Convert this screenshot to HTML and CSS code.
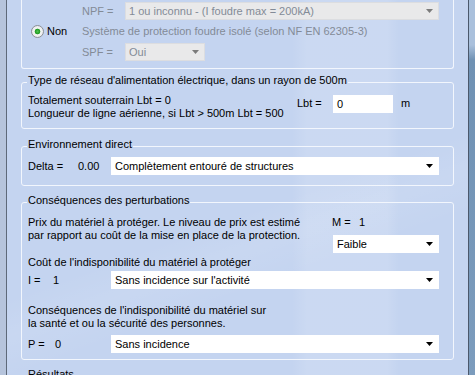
FILE: index.html
```html
<!DOCTYPE html>
<html lang="fr">
<head>
  <meta charset="UTF-8">
  <meta name="viewport" content="width=device-width, initial-scale=1.0">
  <title>Analyse du risque foudre</title>
  <link rel="stylesheet" href="styles.css">
</head>
<body>
  <div class="window">
    <div class="frame-left"></div>

    <div class="client">
      <!-- Protection foudre (scrolled, top is hidden) -->
      <div class="group group-top">
        <span></span>
        <span class="off">NPF =</span>
        <div class="combo off">1 ou inconnu - (I foudre max = 200kA)<svg class="arrow" width="7" height="4" viewBox="0 0 7 4"><polygon points="0,0 7,0 3.5,4"/></svg></div>

        <label class="radio"><span class="dot"></span>Non</label>
        <span class="off span2">Système de protection foudre isolé (selon NF EN 62305-3)</span>

        <span></span>
        <span class="off">SPF =</span>
        <div class="combo off small">Oui<svg class="arrow" width="7" height="4" viewBox="0 0 7 4"><polygon points="0,0 7,0 3.5,4"/></svg></div>
      </div>

      <!-- Réseau d'alimentation -->
      <fieldset class="group group-lbt">
        <legend>Type de réseau d'alimentation électrique, dans un rayon de 500m</legend>
        <div class="lbt-row">
          <p>Totalement souterrain Lbt = 0<br>Longueur de ligne aérienne, si Lbt &gt; 500m Lbt = 500</p>
          <span class="lbt-label">Lbt =</span>
          <div class="field">0</div>
          <span class="unit">m</span>
        </div>
      </fieldset>

      <!-- Environnement -->
      <fieldset class="group group-env">
        <legend>Environnement direct</legend>
        <div class="var-row">
          <span class="k k-delta">Delta =</span>
          <span class="v">0.00</span>
          <div class="combo">Complètement entouré de structures<svg class="arrow" width="7" height="4" viewBox="0 0 7 4"><polygon points="0,0 7,0 3.5,4"/></svg></div>
        </div>
      </fieldset>

      <!-- Conséquences -->
      <fieldset class="group group-csq">
        <legend>Conséquences des perturbations</legend>
        <div class="price">
          <p>Prix du matériel à protéger. Le niveau de prix est estimé<br>par rapport au coût de la mise en place de la protection.</p>
          <div class="price-side">
            <div><span class="k k-m">M =</span><span>1</span></div>
            <div class="combo">Faible<svg class="arrow" width="7" height="4" viewBox="0 0 7 4"><polygon points="0,0 7,0 3.5,4"/></svg></div>
          </div>
        </div>

        <p class="q q-cost">Coût de l'indisponibilité du matériel à protéger</p>
        <div class="var-row row-i">
          <span class="k k-i">I =</span>
          <span class="v">1</span>
          <div class="combo">Sans incidence sur l'activité<svg class="arrow" width="7" height="4" viewBox="0 0 7 4"><polygon points="0,0 7,0 3.5,4"/></svg></div>
        </div>

        <p class="q q-safety">Conséquences de l'indisponibilité du matériel sur<br>la santé et ou la sécurité des personnes.</p>
        <div class="var-row row-p">
          <span class="k k-p">P =</span>
          <span class="v">0</span>
          <div class="combo">Sans incidence<svg class="arrow" width="7" height="4" viewBox="0 0 7 4"><polygon points="0,0 7,0 3.5,4"/></svg></div>
        </div>
      </fieldset>

      <fieldset class="group group-res">
        <legend>Résultats</legend>
      </fieldset>
    </div>

    <div class="frame-right"></div>
  </div>
</body>
</html>
```

FILE: styles.css
```css
/* Global */
* {
  box-sizing: border-box;
  margin: 0;
  padding: 0;
}

html, body {
  height: 100%;
  overflow: hidden;
}

body {
  font-family: "Liberation Sans", Arial, sans-serif;
  font-size: 11px;
  line-height: 13px;
  color: #000;
  background-color: #c5d5f1;
}

/* Window frame */
.window {
  display: flex;
  height: 375px;
}

.frame-left {
  width: 7px;
  background-color: #b6c4dc;
  border-right: 1px solid #5e6979;
}

.frame-right {
  width: 7px;
  background: linear-gradient(180deg, #a9c0dc 0, #a9c0dc 45px, #6f91b3 60px, #7c9cbd 100%);
  border-left: 1px solid #4b586c;
}

.client {
  flex: 1;
  padding: 0 14px;
  background:
    linear-gradient(90deg, rgba(255,255,255,0) 285px, rgba(255,255,255,0.12) 300px, rgba(255,255,255,0.12) 380px, rgba(255,255,255,0) 392px),
    linear-gradient(160deg, rgba(255,255,255,0) 55%, rgba(255,255,255,0.08) 62%, rgba(255,255,255,0) 70%),
    #c4d4f0;
}

/* Group boxes */
.group {
  border: 1px solid #f2f6fd;
  border-radius: 3px;
  padding: 0 14px 0 6px;
  margin-top: 8px;
  min-width: 0;
}

.group legend {
  padding: 0 1px 4px;
  margin-left: -1px;
  line-height: 13px;
}

.group-top {
  border-top: none;
  border-radius: 0 0 3px 3px;
  margin-top: 0;
  padding: 2px 14px 7px 10px;
  display: grid;
  grid-template-columns: 50px 43px 1fr;
  grid-template-rows: 18px 13px 18px;
  row-gap: 5px;
  align-items: center;
}

.group-top .span2 {
  grid-column: span 2;
}

.off {
  color: #838b97;
}

.radio {
  display: flex;
  align-items: center;
  gap: 3px;
}

.radio .dot {
  width: 13px;
  height: 13px;
  margin-left: -1px;
  border-radius: 50%;
  border: 1px solid #8a8f96;
  background: radial-gradient(circle, #4fc14f 0, #1f9a22 2.5px, #f4f4f4 3.2px, #e0e3e7 100%);
}

/* Combo boxes */
.combo {
  display: flex;
  justify-content: space-between;
  align-items: center;
  height: 18px;
  padding: 0 6px 0 4px;
  background-color: #fff;
  white-space: nowrap;
}

.combo .arrow {
  fill: #000;
  flex: none;
}

.combo.off {
  background-color: #e9e9ea;
  border: 1px solid #dcdde0;
  padding-left: 3px;
  padding-right: 5px;
}

.combo.off .arrow {
  fill: #7b7b7b;
}

.combo.small {
  width: 80px;
}

/* Réseau */
.group-lbt {
  margin-top: 5px;
  padding-top: 3px;
  padding-bottom: 8px;
}

.lbt-row {
  display: grid;
  grid-template-columns: 269px 36px 60px auto;
  align-items: start;
}

.lbt-label {
  margin-top: 3px;
}

.field {
  height: 18px;
  margin-top: 1px;
  padding-left: 4px;
  line-height: 18px;
  background-color: #fff;
}

.unit {
  margin-top: 3px;
  margin-left: 8px;
}

/* Variable rows */
.var-row {
  display: flex;
  align-items: center;
}

.var-row .k,
.var-row .v {
  flex: none;
}

.var-row .combo {
  flex: 1;
}

.k-delta { width: 50px; }
.k-i { width: 25px; }
.k-p { width: 27px; }
.k-m { display: inline-block; width: 27px; }

.var-row .v {
  width: 33px;
}

.row-i .v { width: 58px; }
.row-p .v { width: 56px; }

.group-env {
  margin-top: 9px;
  padding-top: 2px;
  padding-bottom: 10px;
}

/* Conséquences */
.group-csq {
  padding-top: 5px;
  padding-bottom: 6px;
}

.price {
  display: grid;
  grid-template-columns: 304px 1fr;
}

.price-side .combo {
  margin-top: 6px;
  margin-left: 1px;
}

.q-cost {
  margin-top: 3px;
}

.row-i {
  margin-top: 2px;
}

.q-safety {
  margin-top: 15px;
}

.row-p {
  margin-top: 5px;
}

.group-res {
  height: 80px;
}
```
